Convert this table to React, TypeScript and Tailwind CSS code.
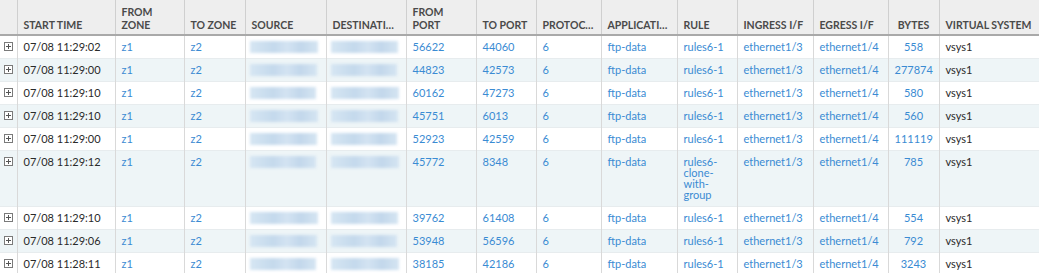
import React from "react";

type Row = {
  time: string;
  from: string;
  to: string;
  rule: string;
  bytes: string;
};

const rows: Row[] = [
  { time: "07/08 11:29:02", from: "56622", to: "44060", rule: "rules6-1", bytes: "558" },
  { time: "07/08 11:29:00", from: "44823", to: "42573", rule: "rules6-1", bytes: "277874" },
  { time: "07/08 11:29:10", from: "60162", to: "47273", rule: "rules6-1", bytes: "580" },
  { time: "07/08 11:29:10", from: "45751", to: "6013", rule: "rules6-1", bytes: "560" },
  { time: "07/08 11:29:00", from: "52923", to: "42559", rule: "rules6-1", bytes: "111119" },
  { time: "07/08 11:29:12", from: "45772", to: "8348", rule: "rules6-clone-with-group", bytes: "785" },
  { time: "07/08 11:29:10", from: "39762", to: "61408", rule: "rules6-1", bytes: "554" },
  { time: "07/08 11:29:06", from: "53948", to: "56596", rule: "rules6-1", bytes: "792" },
  { time: "07/08 11:28:11", from: "38185", to: "42186", rule: "rules6-1", bytes: "3243" },
];

const widths = [17, 98, 69, 61, 81, 80, 70, 60, 65, 76, 60, 76, 75, 51, 100];

const headers: { label: React.ReactNode; center?: boolean }[] = [
  { label: "" },
  { label: "Start Time" },
  { label: <>From<br />Zone</> },
  { label: "To Zone" },
  { label: "Source" },
  { label: "Destination" },
  { label: <>From<br />Port</> },
  { label: "To Port" },
  { label: "Protocol" },
  { label: "Application" },
  { label: "Rule" },
  { label: "Ingress I/F" },
  { label: "Egress I/F" },
  { label: "Bytes", center: true },
  { label: "Virtual System" },
];

function ExpandIcon() {
  return (
    <svg width="9" height="9" viewBox="0 0 9 9" className="block">
      <rect x="0.5" y="0.5" width="8" height="8" fill="#fff" stroke="#7a7a7a" />
      <path d="M2 4.5h5M4.5 2v5" stroke="#555" strokeWidth="1" />
    </svg>
  );
}

// blurred-out IP address
function Blur({ w }: { w: number }) {
  return (
    <div
      className="h-[12px] mt-[-1px] blur-[1.5px] bg-[linear-gradient(90deg,#d6e6f3,#c4d9ec_35%,#d3e3f2_55%,#c2d7eb_75%,#d5e5f2)]"
      style={{ width: w }}
    />
  );
}

const link = "text-[#3a8bd3]";
const td = "border-r border-[#d9d9d9] px-[6px] pt-[5px] pb-[6px] align-top leading-[11px] overflow-hidden";

export default function App() {
  return (
    <div className="w-[1039px] h-[273px] overflow-hidden bg-white font-['Lato',sans-serif] text-[11px] text-[#2a2a2a]">
      <table className="table-fixed border-collapse w-[1039px]">
        <colgroup>
          {widths.map((w, i) => (
            <col key={i} style={{ width: w }} />
          ))}
        </colgroup>
        <thead>
          <tr className="h-[35px] bg-[#eeeeee] border-b-2 border-[#a9a9a9]">
            {headers.map((h, i) => (
              <th
                key={i}
                className={`border-r border-[#cfcfcf] px-[5px] pb-[2px] align-bottom font-bold uppercase text-[10.5px] text-[#4a4a4a] leading-[13px] whitespace-nowrap overflow-hidden text-ellipsis ${
                  h.center ? "text-center" : "text-left pl-[6px]"
                }`}
              >
                {h.label}
              </th>
            ))}
          </tr>
        </thead>
        <tbody>
          {rows.map((r, i) => (
            <tr
              key={i}
              className={`border-b border-[#e7ecee] ${i % 2 === 1 ? "bg-[#eef5f7]" : "bg-white"}`}
            >
              <td className="border-r border-[#d9d9d9] pl-[4px] pt-[6px] align-top">
                <ExpandIcon />
              </td>
              <td className={td}>{r.time}</td>
              <td className={`${td} ${link}`}>z1</td>
              <td className={`${td} ${link}`}>z2</td>
              <td className="border-r border-[#d9d9d9] pl-[4px] pt-[6px] align-top">
                <Blur w={68 - (i % 3)} />
              </td>
              <td className="border-r border-[#d9d9d9] pl-[4px] pt-[6px] align-top">
                <Blur w={68 - ((i + 1) % 3)} />
              </td>
              <td className={`${td} ${link}`}>{r.from}</td>
              <td className={`${td} ${link}`}>{r.to}</td>
              <td className={`${td} ${link}`}>6</td>
              <td className={`${td} ${link}`}>ftp-data</td>
              <td className={`${td} ${link} break-words`}>{r.rule}</td>
              <td className={`${td} ${link}`}>ethernet1/3</td>
              <td className={`${td} ${link}`}>ethernet1/4</td>
              <td className={`${td} ${link} text-center`}>{r.bytes}</td>
              <td className={td}>vsys1</td>
            </tr>
          ))}
        </tbody>
      </table>
    </div>
  );
}
